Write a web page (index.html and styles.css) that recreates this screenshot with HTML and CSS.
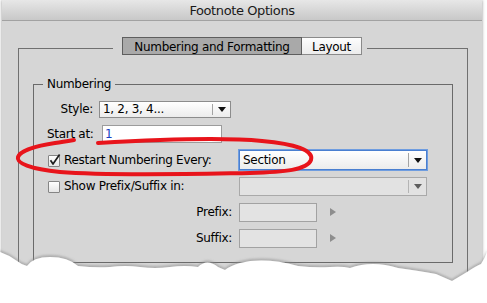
FILE: index.html
```html
<!DOCTYPE html>
<html>
<head>
<meta charset="utf-8">
<link rel="stylesheet" href="styles.css">
</head>
<body>
<div class="window">
  <div class="titlebar">Footnote Options</div>
  <div class="content">
    <div class="tabframe">
      <div class="tabstrip">
        <div class="tabs">
          <div class="tab active">Numbering and Formatting</div>
          <div class="tab layout">Layout</div>
        </div>
      </div>
      <div class="group">
        <div class="legend">Numbering</div>
        <div class="rows">
          <div class="row r1">
            <span class="lbl">Style:</span>
            <div class="select style-sel"><span class="val">1, 2, 3, 4...</span><span class="btn"><i class="tri"></i></span></div>
          </div>
          <div class="row r2">
            <span class="lbl">Start at:</span>
            <div class="input start-in">1</div>
          </div>
          <div class="row r3">
            <div class="chkwrap"><span class="chk"><svg width="13" height="13" viewBox="0 0 13 13"><path d="M2.5 5.2 L5 9 L11.6 -0.5" fill="none" stroke="#1e1e1e" stroke-width="1.7" stroke-linejoin="round"/></svg></span><span class="chklbl">Restart Numbering Every:</span></div>
            <div class="select wide focus"><span class="val">Section</span><span class="btn"><i class="tri"></i></span></div>
          </div>
          <div class="row r4">
            <div class="chkwrap"><span class="chk"></span><span class="chklbl">Show Prefix/Suffix in:</span></div>
            <div class="select wide disabled"><span class="val"></span><span class="btn"><i class="tri"></i></span></div>
          </div>
          <div class="row r5">
            <span class="lbl long">Prefix:</span>
            <div class="input small"></div>
            <i class="rtri"></i>
          </div>
          <div class="row r6">
            <span class="lbl long">Suffix:</span>
            <div class="input small"></div>
            <i class="rtri"></i>
          </div>
        </div>
      </div>
    </div>
  </div>
</div>
<svg class="overlay" width="487" height="303" viewBox="0 0 487 303">
  <defs>
    <filter id="sh" x="-5%" y="-50%" width="110%" height="200%">
      <feDropShadow dx="0" dy="-2" stdDeviation="1.3" flood-color="#8a8a8a" flood-opacity="0.55"/>
    </filter>
  </defs>
  <path class="red" d="M98 143 C150 140 220 137 262 141 C295 144 314 150 311 160 C307 170 285 172 250 173 C190 174 110 176 60 172 C30 169 16 163 18 157 C20 151 35 146 55 143 C62 142 68 141 74 140"/>
  <path class="torn" filter="url(#sh)" d="M0 252 Q9 255 17 261 Q22 265 27 266 Q33 257 50 257 Q68 257 78 266 Q95 268 110 267 Q125 265 140 267 Q155 269 170 267 Q185 265 198 267 Q207 258 218 267 L225 270 Q230 266 240 263 Q265 257 298 266 Q315 268 330 267 Q342 266 350 268 Q372 260 398 268 Q420 271 436 274 L452 281 L467 272 Q476 266 481 264 Q485 258 487 252 L487 303 L0 303 Z"/>
</svg>
</body>
</html>
```
FILE: styles.css
```css
html, body {
  margin: 0;
  padding: 0;
}
body {
  width: 487px;
  height: 303px;
  overflow: hidden;
  position: relative;
  background: #ffffff;
  font-family: "DejaVu Sans", "Verdana", sans-serif;
  font-size: 12px;
  letter-spacing: -0.3px;
  color: #000;
}
.window {
  margin-left: 2px;
  width: 480px;
  height: 303px;
  background: #d6d6d6;
  box-shadow: 0 0 3px rgba(0, 0, 0, 0.45);
}
.titlebar {
  height: 20px;
  border-bottom: 1px solid #a2a2a2;
  background: linear-gradient(#e7e7e7, #c8c8c8);
  text-align: center;
  line-height: 21px;
  font-size: 13px;
  letter-spacing: -0.4px;
  color: #1a1a1a;
}
.content {
  padding: 27px 14px 0 16px;
}
.tabframe {
  width: 448px;
  height: 240px;
  border: 1px solid #707070;
}
.tabstrip {
  display: flex;
  margin-top: -12px;
}
.tabs {
  display: flex;
  margin-left: 94px;
  padding: 0 5px 0 9px;
  background: #d6d6d6;
}
.tab {
  height: 15px;
  padding-top: 1px;
  line-height: 16px;
  text-align: center;
  white-space: nowrap;
  border: 1px solid #8a8a8a;
}
.tab.active {
  width: 178px;
  background: #a9a9a9;
  border-color: #5e5e5e;
}
.tab.layout {
  width: 59px;
  border-left: 0;
  background: linear-gradient(#fdfdfd, #ececec);
}
.group {
  margin: 29px 14px 0 14px;
  height: 177px;
  border: 1px solid #6a6a6a;
  display: flex;
  flex-direction: column;
}
.legend {
  align-self: flex-start;
  margin: -8px 0 0 9px;
  padding: 0 4px;
  line-height: 14px;
  background: #d6d6d6;
}
.rows {
  margin-top: 6px;
  padding-left: 13px;
  display: flex;
  flex-direction: column;
}
.row {
  display: flex;
  align-items: center;
  height: 26px;
  white-space: nowrap;
}
.row.r1 {
  height: 24px;
}
.lbl {
  width: 46px;
  text-align: right;
  flex: none;
  white-space: nowrap;
}
.lbl.long {
  width: 185px;
}
.select {
  display: flex;
  align-items: stretch;
  box-sizing: border-box;
  border: 1px solid #8c8c8c;
  background: linear-gradient(#ffffff, #ececec);
}
.select .val {
  flex: 1;
  padding-left: 3px;
  display: flex;
  align-items: center;
}
.select .btn {
  width: 17px;
  flex: none;
  margin: 2px 0;
  border-left: 1px solid #a4a4a4;
  display: flex;
  align-items: center;
  justify-content: center;
}
.tri {
  width: 0;
  height: 0;
  border-left: 4px solid transparent;
  border-right: 4px solid transparent;
  border-top: 5px solid #111;
}
.style-sel {
  margin-left: 6px;
  width: 132px;
  height: 17px;
}
.input {
  box-sizing: border-box;
  border: 1px solid #9c9c9c;
  background: #ffffff;
}
.start-in {
  margin-left: 9px;
  width: 120px;
  height: 18px;
  padding-left: 2px;
  line-height: 16px;
  color: #1b3fc4;
}
.chkwrap {
  width: 192px;
  flex: none;
  display: flex;
  align-items: center;
}
.chk {
  width: 12px;
  height: 12px;
  margin-left: 1px;
  margin-top: 2px;
  box-sizing: border-box;
  border: 1px solid #858585;
  border-radius: 1px;
  background: linear-gradient(#ffffff, #e6e6e6);
  position: relative;
}
.chk svg {
  position: absolute;
  left: -1px;
  top: -1px;
  overflow: visible;
}
.chklbl {
  margin-left: 4px;
}
.select.wide {
  width: 188px;
  height: 20px;
}
.select.focus {
  border-color: #4a7fd0;
  box-shadow: 0 0 0 1px #6f9de0;
}
.select.disabled {
  height: 19px;
  border-color: #a9a9a9;
  background: #e2e2e2;
}
.select.disabled .btn {
  border-left-color: #b4b4b4;
}
.select.disabled .tri {
  border-top-color: #5e5e5e;
}
.input.small {
  margin-left: 7px;
  width: 78px;
  height: 19px;
  background: #e3e3e3;
  border-color: #a2a2a2;
}
.rtri {
  margin-left: 13px;
  width: 0;
  height: 0;
  border-top: 4.5px solid transparent;
  border-bottom: 4.5px solid transparent;
  border-left: 6px solid #8e8e8e;
}
.overlay {
  position: absolute;
  left: 0;
  top: 0;
  pointer-events: none;
}
.overlay .red {
  fill: none;
  stroke: #e8141b;
  stroke-width: 4;
  stroke-linecap: round;
  stroke-linejoin: round;
}
.overlay .torn {
  fill: #ffffff;
}
```
